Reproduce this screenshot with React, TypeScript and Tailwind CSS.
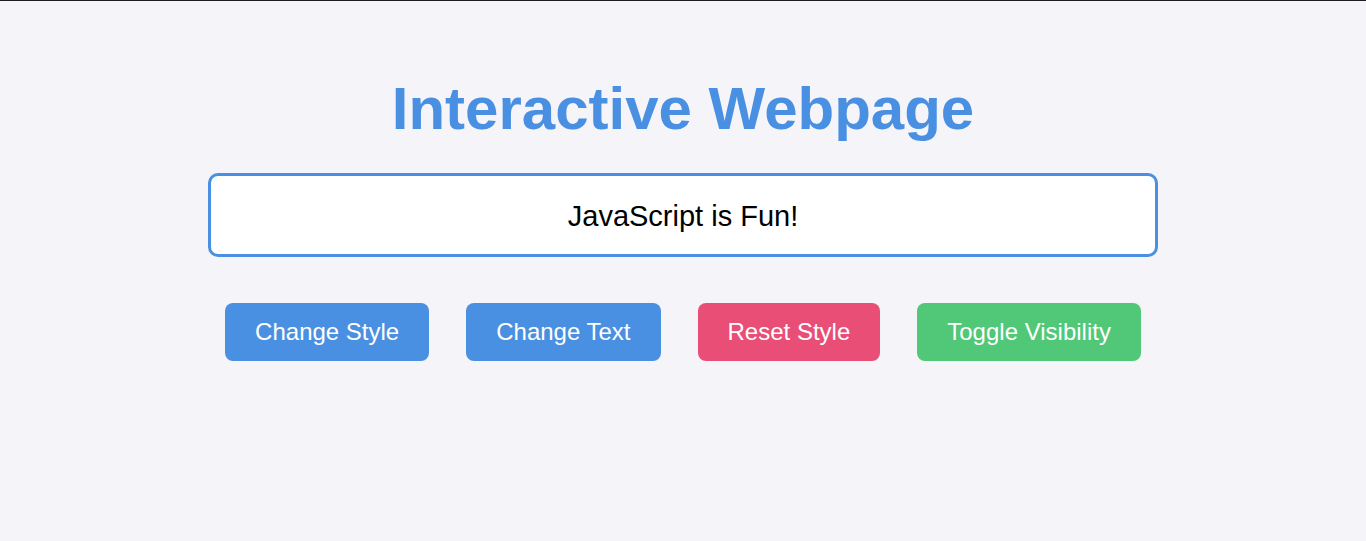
export default function App() {
  const font = { fontFamily: '"Liberation Sans", Arial, sans-serif' };
  return (
    <div className="min-h-[541px] bg-[#f4f4f9] border-t border-[#1c1b22] flex flex-col items-center" style={font}>
      <h1 className="mt-[73px] text-[60px] leading-[69px] font-bold text-[#4a90e2] m-0">Interactive Webpage</h1>
      <div className="mt-[30px] w-[950px] h-[84px] bg-white border-[3px] border-[#4a90e2] rounded-[10px] flex items-center justify-center text-[29px] leading-none pt-[2px] text-black">
        JavaScript is Fun!
      </div>
      <div className="mt-[46px] flex gap-[37px]">
        <button className="h-[58px] px-[30px] text-[24px] text-white bg-[#4a90e2] rounded-[8px]">Change Style</button>
        <button className="h-[58px] px-[30px] text-[24px] text-white bg-[#4a90e2] rounded-[8px]">Change Text</button>
        <button className="h-[58px] px-[30px] text-[24px] text-white bg-[#e94e77] rounded-[8px]">Reset Style</button>
        <button className="h-[58px] px-[30px] text-[24px] text-white bg-[#50c878] rounded-[8px]">Toggle Visibility</button>
      </div>
    </div>
  );
}
